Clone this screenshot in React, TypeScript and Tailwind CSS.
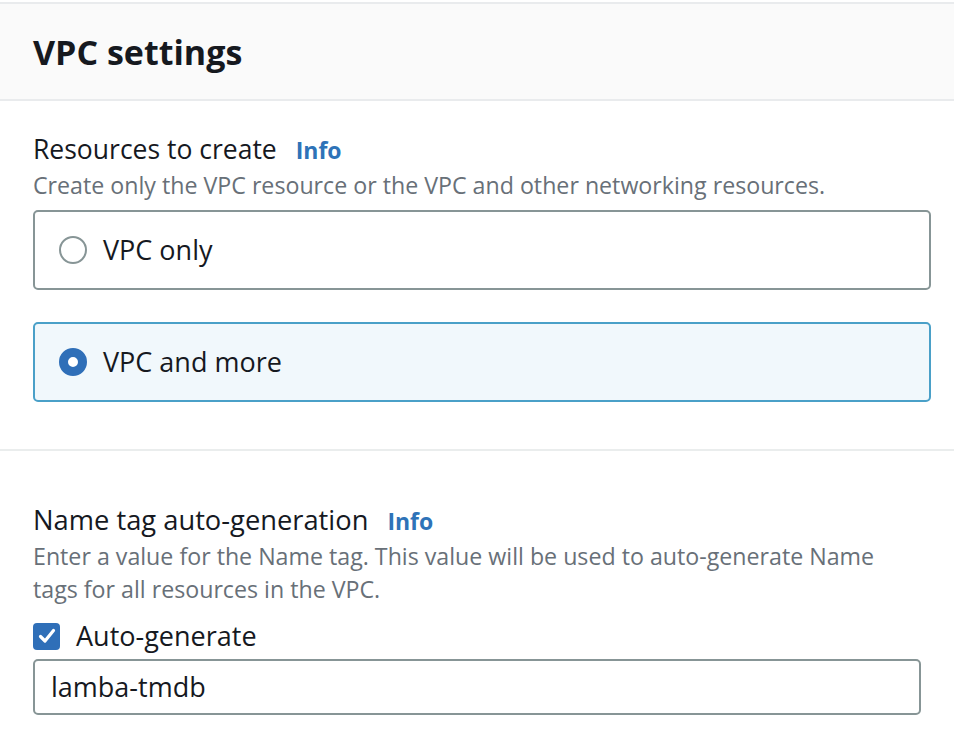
const font = { fontFamily: '"Open Sans", "Noto Sans", Arial, sans-serif' };

function InfoLink() {
  return <span className="ml-[19px] text-[23px] font-bold text-[#2e73b8]">Info</span>;
}

function RadioTile({ label, checked }: { label: string; checked?: boolean }) {
  return (
    <div
      className={`flex h-[80px] items-center rounded-[5px] border-2 pl-[24px] ${
        checked ? 'border-[#4aa0c8] bg-[#f1f8fc]' : 'border-[#879596] bg-white'
      }`}
    >
      {checked ? (
        <span className="h-[28px] w-[28px] rounded-full border-[9px] border-[#2f6fb8] bg-white" />
      ) : (
        <span className="h-[28px] w-[28px] rounded-full border-2 border-[#879596] bg-white" />
      )}
      <span className="ml-[16px] text-[27px] text-[#16191f]">{label}</span>
    </div>
  );
}

export default function App() {
  return (
    <div className="min-h-[750px] w-[954px] overflow-hidden bg-white" style={font}>
      <div className="mt-[2px] border-y-2 border-[#e9ebed] bg-[#fafafa] px-[33px] pb-[26px] pt-[27px]">
        <h2 className="text-[34px] font-bold leading-[42px] text-[#16191f]">VPC settings</h2>
      </div>

      <div className="border-b-2 border-[#eaeded] pb-[47px] pl-[33px] pr-[23px] pt-[30px]">
        <div className="flex items-baseline text-[26.5px] leading-[36px] text-[#16191f]">
          Resources to create <InfoLink />
        </div>
        <p className="mt-[1px] text-[23.2px] leading-[32px] text-[#687078]">
          Create only the VPC resource or the VPC and other networking resources.
        </p>
        <div className="mt-[9px] flex flex-col gap-[32px]">
          <RadioTile label="VPC only" />
          <RadioTile label="VPC and more" checked />
        </div>
      </div>

      <div className="px-[33px] pt-[51px]">
        <div className="flex items-baseline text-[27.3px] leading-[36px] text-[#16191f]">
          Name tag auto-generation <InfoLink />
        </div>
        <p className="mt-[1px] text-[23.2px] leading-[33px] text-[#687078]">
          Enter a value for the Name tag. This value will be used to auto-generate Name tags for all resources in the VPC.
        </p>
        <label className="mt-[12px] flex items-center">
          <span className="flex h-[27px] w-[27px] items-center justify-center rounded-[4px] bg-[#2f6fb8]">
            <svg width="20" height="20" viewBox="0 0 20 20" fill="none">
              <path d="M3.5 10.5 L8 15 L16.5 4.5" stroke="white" strokeWidth="3.2" strokeLinecap="round" strokeLinejoin="round" />
            </svg>
          </span>
          <span className="ml-[16px] text-[27px] leading-[36px] text-[#16191f]">Auto-generate</span>
        </label>
        <div className="mt-[5px] flex h-[56px] items-center rounded-[5px] border-2 border-[#879596] px-[16px] text-[27px] text-[#16191f]">
          lamba-tmdb
        </div>
      </div>
    </div>
  );
}
